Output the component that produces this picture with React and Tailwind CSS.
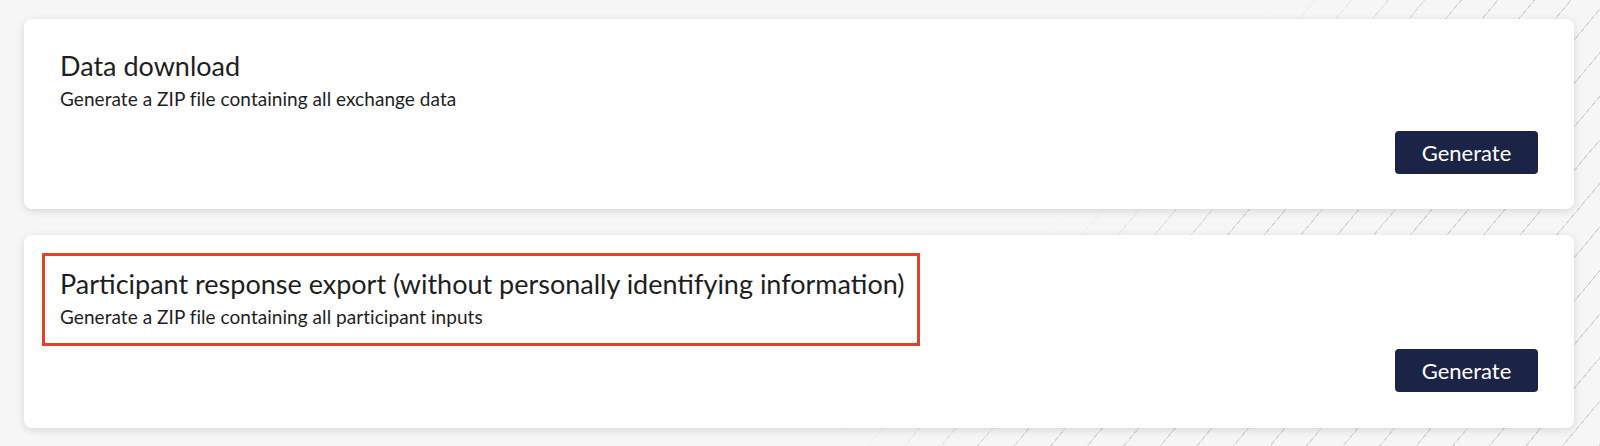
import React from "react";

function Card({ title, subtitle, pt, pb, highlight }) {
  return (
    <div
      className="relative rounded-lg bg-white shadow-[0_2px_8px_rgba(0,0,0,0.13)] px-[36px]"
      style={{ paddingTop: pt, paddingBottom: pb }}
    >
      {highlight && (
        <div className="absolute left-[18px] top-[18px] w-[878px] h-[93px] border-[3px] border-[#e0422a] pointer-events-none" />
      )}
      <div className="text-[27px] leading-[36px] text-[#1e1e1e]">{title}</div>
      <div className="mt-[2px] text-[19px] leading-[26px] text-[#1e1e1e] tracking-[0.05px]">{subtitle}</div>
      <div className="mt-[19px] flex justify-end">
        <button className="h-[43px] w-[143px] rounded-[4px] bg-[#1b2447] text-white text-[22px] leading-[43px]">
          Generate
        </button>
      </div>
    </div>
  );
}

export default function App() {
  return (
    <div
      className="relative w-[1600px] h-[446px] overflow-hidden bg-[#f6f6f6]"
      style={{ fontFamily: "Lato, 'Open Sans', sans-serif" }}
    >
      <div className="absolute inset-0 bg-[repeating-linear-gradient(130deg,transparent_0px,transparent_27px,#d4d4d4_27px,#d4d4d4_28px)] [mask-image:linear-gradient(135deg,transparent_62%,black_72%)]" />
      <div className="relative flex flex-col gap-[26px] pt-[19px] pl-[24px] pr-[26px]">
        <Card
          title="Data download"
          subtitle="Generate a ZIP file containing all exchange data"
          pt={29}
          pb={35}
        />
        <Card
          title="Participant response export (without personally identifying information)"
          subtitle="Generate a ZIP file containing all participant inputs"
          pt={31}
          pb={36}
          highlight
        />
      </div>
    </div>
  );
}
